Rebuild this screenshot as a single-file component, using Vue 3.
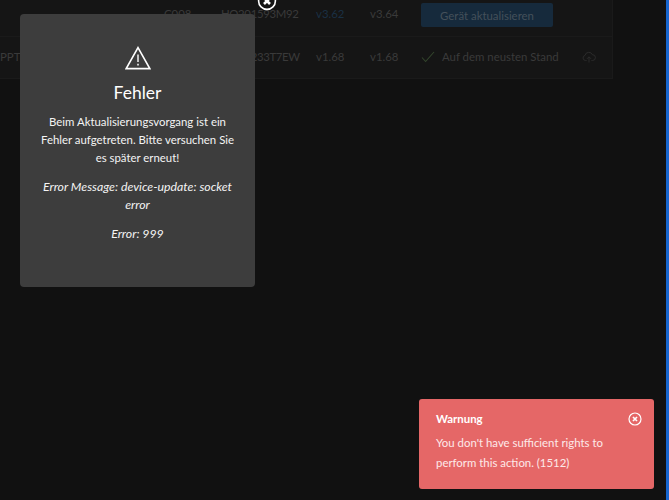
<script setup>
const rows = [
  { id: 'a', name: '', model: 'C008', serial: 'HQ201593M92', cur: 'v3.62', next: 'v3.64', action: true },
  { id: 'b', name: 'PPT', model: '', serial: 'HQ29233T7EW', cur: 'v1.68', next: 'v1.68', action: false },
]
</script>

<template>
  <div class="page">
    <main class="content">
      <section class="table">
        <div v-for="r in rows" :key="r.id" class="row" :class="r.action ? 'row-top' : 'row-bottom'">
          <span class="name">{{ r.name }}</span>
          <span class="model">{{ r.model }}</span>
          <span class="serial">{{ r.serial }}</span>
          <span class="ver" :class="{ outdated: r.action }">{{ r.cur }}</span>
          <span class="ver">{{ r.next }}</span>
          <div class="status">
            <button v-if="r.action" class="update">Gerät aktualisieren</button>
            <template v-else>
              <svg class="check" width="14" height="12" viewBox="0 0 14 12" fill="none">
                <path d="M1 6.5 L4.6 10.5 L13 1" stroke="#33452c" stroke-width="1.1" />
              </svg>
              <span class="ok">Auf dem neusten Stand</span>
            </template>
          </div>
          <svg v-if="!r.action" class="cloud" width="14" height="12" viewBox="0 0 14 12" fill="none">
            <path d="M4.6 9.5 H3.4 A2.6 2.6 0 0 1 3 4.4 A3.9 3.9 0 0 1 10.4 3.7 A2.9 2.9 0 0 1 10.6 9.5 H9.4 M7 11.5 V6 M5 7.8 L7 5.8 L9 7.8" stroke="#2e2e2e" stroke-width="0.9" />
          </svg>
        </div>
      </section>
    </main>
    <div class="strip"></div>

    <div class="modal">
      <svg class="warn" width="26" height="24" viewBox="0 0 26 24" fill="none">
        <path d="M13 1.6 L24.8 22.6 H1.2 Z" stroke="#fff" stroke-width="1.6" stroke-linejoin="miter" />
        <path d="M13 8.5 V16" stroke="#fff" stroke-width="1.4" />
        <path d="M13 17.8 V19.6" stroke="#fff" stroke-width="1.5" />
      </svg>
      <h2 class="title">Fehler</h2>
      <p class="msg">Beim Aktualisierungsvorgang ist ein Fehler aufgetreten. Bitte versuchen Sie es später erneut!</p>
      <p class="msg em">Error Message: device-update: socket error</p>
      <p class="msg em">Error: 999</p>
    </div>

    <svg class="modal-close" width="20" height="20" viewBox="0 0 20 20" fill="none">
      <circle cx="10" cy="10" r="8.4" stroke="#fff" stroke-width="1.6" />
      <path d="M7 7 L13 13 M13 7 L7 13" stroke="#fff" stroke-width="2.6" />
    </svg>

    <div class="toast">
      <div class="toast-head">
        <strong>Warnung</strong>
        <svg width="14" height="14" viewBox="0 0 14 14" fill="none">
          <circle cx="7" cy="7" r="6" stroke="#fff" stroke-width="1.2" />
          <path d="M5 5 L9 9 M9 5 L5 9" stroke="#fff" stroke-width="1.7" />
        </svg>
      </div>
      <p>You don't have sufficient rights to perform this action. (1512)</p>
    </div>
  </div>
</template>

<style scoped>
.page {
  position: relative;
  display: flex;
  height: 500px;
  overflow: hidden;
  background: #111;
  font-family: Lato, "Open Sans", sans-serif;
}
.content { flex: 1; min-width: 0; }
.strip { width: 3px; background: #1766d0; }
.table {
  width: 613px;
  height: 79px;
  background: #151515;
  border-right: 1px solid #1a1a1a;
  border-bottom: 1px solid #1a1a1a;
  box-sizing: border-box;
}
.row {
  display: grid;
  grid-template-columns: 164px 57px 95px 54px 51px 161px 1fr;
  align-items: center;
  font-size: 11.4px;
  color: #3a3a3a;
}
.serial { letter-spacing: -0.35px; white-space: nowrap; }
.row-top { height: 27px; margin-bottom: 9px; }
.row-bottom { height: 39px; padding-bottom: 2px; border-top: 1px solid #1a1a1a; }
.outdated { color: #1a3044; }
.status { display: flex; align-items: center; }
.update {
  width: 132px;
  height: 24px;
  margin: 3px 0 0;
  border: 0;
  border-radius: 2px;
  background: #162a3c;
  color: #44505a;
  font: inherit;
  font-size: 11.4px;
  padding: 0;
}
.check { margin-right: 7px; }
.ok { white-space: nowrap; }
.modal {
  position: absolute;
  left: 20px;
  top: 14px;
  width: 235px;
  height: 273px;
  box-sizing: border-box;
  padding: 32px 20px 0;
  background: #3d3d3d;
  border-radius: 4px;
  color: #fff;
  text-align: center;
}
.warn { display: block; margin: 0 auto; }
.title {
  margin: 11px 0 0;
  font-size: 17.5px;
  line-height: 24px;
  font-weight: 400;
}
.title + .msg { margin-top: 8px; }
.msg {
  margin: 11px 0 0;
  font-size: 11.4px;
  line-height: 18px;
  color: #f4f4f4;
}
.em { font-style: italic; font-size: 12.3px; }
.modal-close { position: absolute; left: 257px; top: -9px; }
.toast {
  position: absolute;
  left: 419px;
  top: 399px;
  width: 235px;
  height: 90px;
  box-sizing: border-box;
  padding: 13px 12px 0 17px;
  background: #e56767;
  border-radius: 3px;
  color: #fff;
}
.toast-head {
  display: flex;
  justify-content: space-between;
  align-items: center;
  font-size: 11.4px;
  line-height: 14px;
}
.toast p {
  margin: 7px 0 0;
  font-size: 11.4px;
  line-height: 20px;
  color: #fde9e9;
}
</style>

<style>
html, body { background: #111; }
</style>
